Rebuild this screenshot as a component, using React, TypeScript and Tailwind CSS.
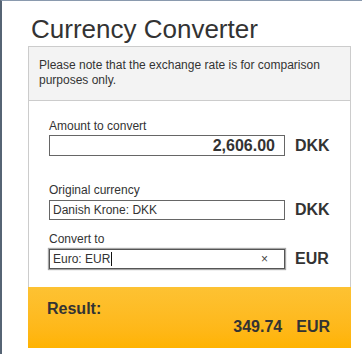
import React from 'react';

function Field({
  label,
  value,
  unit,
  align = 'left',
  tall = false,
  focused = false,
}: {
  label: string;
  value: string;
  unit: string;
  align?: 'left' | 'right';
  tall?: boolean;
  focused?: boolean;
}) {
  return (
    <div>
      <div className="text-[12px] leading-[15px] text-[#333]">{label}</div>
      <div className={(tall ? 'mt-[1px] ' : 'mt-[2px] ') + 'flex items-center'}>
        <div
          className={
            'w-[236px] flex items-center bg-white ' +
            (tall ? 'h-[21px] ' : 'h-[20px] ') +
            (focused
              ? 'border border-[#555] shadow-[0_0_1px_1px_rgba(0,0,0,0.35)] '
              : 'border border-[#666] ') +
            (align === 'right' ? 'justify-end pr-[9px]' : 'pl-[3px] pr-[3px]')
          }
        >
          {align === 'right' ? (
            <span className="text-[16px] leading-[18px] font-bold text-[#333]">{value}</span>
          ) : (
            <>
              <span className="text-[12px] leading-[16px] text-[#333] flex items-center">
                {value}
                {focused && <span className="ml-[1px] inline-block w-px h-[14px] bg-[#111]" />}
              </span>
              {focused && <span className="ml-auto mr-[13px] text-[12px] leading-[16px] text-[#444]">×</span>}
            </>
          )}
        </div>
        <span className="ml-[10px] text-[16px] leading-[18px] font-bold text-[#333]">{unit}</span>
      </div>
    </div>
  );
}

export default function App() {
  return (
    <div className="w-[362px] h-[354px] bg-white border-l-2 border-t border-l-[#566474] border-t-[#8a9aae] font-['Liberation_Sans',Arial,sans-serif] text-[#333] overflow-hidden">
      <h1 className="pl-[29px] pt-[12px] text-[26px] leading-[32px] text-[#333]">Currency Converter</h1>
      <div className="ml-[26px] mt-[1px] w-[323px] border border-[#ccc] border-b-0">
        {/* note */}
        <div className="h-[54px] bg-[#f3f3f3] border-b border-[#ccc] pl-[10px] pt-[11px] text-[12px] leading-[15px] text-[#333]">
          Please note that the exchange rate is for comparison
          <br />
          purposes only.
        </div>

        {/* form */}
        <div className="pl-[20px] pt-[18px] pb-[18px]">
          <Field label="Amount to convert" value="2,606.00" unit="DKK" align="right" tall />
          <div className="mt-[27px]">
            <Field label="Original currency" value="Danish Krone: DKK" unit="DKK" />
          </div>
          <div className="mt-[12px]">
            <Field label="Convert to" value="Euro: EUR" unit="EUR" focused />
          </div>
        </div>

        {/* result */}
        <div className="h-[61px] -ml-px -mr-px bg-gradient-to-b from-[#fdc232] to-[#ffb300] pl-[19px] pr-[21px] pt-[13px]">
          <div className="text-[16px] font-bold leading-[18px] text-[#333]">Result:</div>
          <div className="flex justify-end text-[16px] font-bold leading-[18px] text-[#333]">
            <span>349.74</span>
            <span className="ml-[14px]">EUR</span>
          </div>
        </div>
      </div>
    </div>
  );
}
